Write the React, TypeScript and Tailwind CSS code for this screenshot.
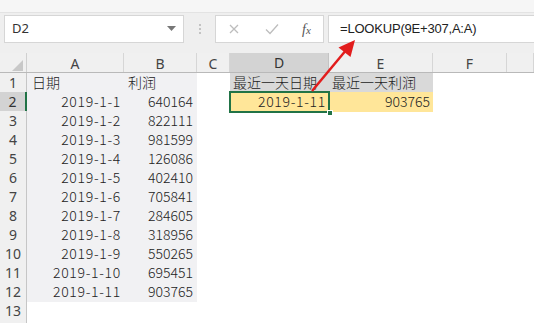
import React from "react";

const cols = ["A", "B", "C", "D", "E", "F", ""];

const data: [string, string][] = [
  ["2019-1-1", "640164"],
  ["2019-1-2", "822111"],
  ["2019-1-3", "981599"],
  ["2019-1-4", "126086"],
  ["2019-1-5", "402410"],
  ["2019-1-6", "705841"],
  ["2019-1-7", "284605"],
  ["2019-1-8", "318956"],
  ["2019-1-9", "550265"],
  ["2019-1-10", "695451"],
  ["2019-1-11", "903765"],
];

const cellFont = { fontFamily: '"Noto Sans CJK SC", "Noto Sans", sans-serif' };

const App = () => {
  const rows = Array.from({ length: 14 }, (_, i) => i + 1);

  return (
    <div
      className="relative w-[534px] h-[323px] overflow-hidden bg-white text-[#222]"
      style={{ fontFamily: '"Noto Sans", "Noto Sans CJK SC", sans-serif' }}
    >
      {/* top strip */}
      <div className="h-[13px] bg-[#f6f6f6] border-b border-[#e3e3e3]" />

      {/* formula bar */}
      <div className="h-[40px] bg-[#efefef] flex items-start pt-[2px] pl-[4px]">
        <div className="w-[180px] h-[28px] bg-white border border-[#d6d6d6] flex items-center justify-between pl-[7px] pr-[7px]">
          <span className="text-[13px] text-[#333]">D2</span>
          <svg width="9" height="6" viewBox="0 0 9 6">
            <path d="M0 0 L9 0 L4.5 5 Z" fill="#777" />
          </svg>
        </div>
        <div className="w-[31px] h-[28px] flex flex-col items-center justify-center gap-[2px]">
          <span className="w-[2px] h-[2px] bg-[#c3c3c3]" />
          <span className="w-[2px] h-[2px] bg-[#c3c3c3]" />
          <span className="w-[2px] h-[2px] bg-[#c3c3c3]" />
        </div>
        <div className="w-[109px] h-[28px] bg-white border border-[#d6d6d6] flex items-center pl-[12px]">
          <svg width="12" height="12" viewBox="0 0 12 12">
            <path d="M2 2 L10 10 M10 2 L2 10" stroke="#bdbdbd" strokeWidth="1.3" />
          </svg>
          <svg className="ml-[25px]" width="14" height="12" viewBox="0 0 14 12">
            <path d="M1 6.5 L5 10.5 L13 1.5" stroke="#bdbdbd" strokeWidth="1.3" fill="none" />
          </svg>
          <span
            className="ml-[23px] text-[14px] italic text-[#555]"
            style={{ fontFamily: '"Liberation Serif", serif' }}
          >
            f<span className="text-[11px]">x</span>
          </span>
        </div>
        <div className="ml-[4px] flex-1 h-[28px] bg-white border border-[#d6d6d6] border-r-0 flex items-center pl-[11px]">
          <span className="text-[13px] text-[#222] tracking-[-0.2px]" style={{ fontFamily: '"Liberation Sans", sans-serif' }}>
            =LOOKUP(9E+307,A:A)
          </span>
        </div>
      </div>

      {/* column headers */}
      <div className="grid grid-cols-[27px_97px_73px_33px_99px_104px_74px_1fr] h-[20px] bg-[#f0f0f0] border-b border-[#b9b9b9] overflow-hidden">
        <div className="relative border-r border-[#d0d0d0]">
          <svg className="absolute right-[3px] bottom-[3px]" width="11" height="11" viewBox="0 0 11 11">
            <path d="M11 0 L11 11 L0 11 Z" fill="#c8c8c8" />
          </svg>
        </div>
        {cols.map((c, i) => (
          <div
            key={i}
            className={
              c === "D"
                ? "flex items-center justify-center text-[14px] leading-[19px] text-[#333] bg-[#d3d3d3] border-r border-[#c4c4c4] border-b-2 border-b-[#217346]"
                : "flex items-center justify-center text-[14px] leading-[19px] text-[#444] border-r border-[#d6d6d6]"
            }
          >
            {c}
          </div>
        ))}
      </div>

      {/* sheet rows */}
      <div className="flex flex-col font-light" style={cellFont}>
        {rows.map((r) => {
          const d = r >= 2 && r <= 12 ? data[r - 2] : null;
          return (
            <div key={r} className="grid grid-cols-[27px_97px_73px_33px_99px_104px_74px_1fr] h-[19px] text-[14px] leading-[19px]">
              <div
                className={
                  r === 2
                    ? "flex items-center justify-center bg-[#d3d3d3] text-[#333] border-r-2 border-r-[#217346] border-b border-b-[#c8c8c8]"
                    : "flex items-center justify-center bg-[#f0f0f0] text-[#444] border-r border-r-[#c6c6c6] border-b border-b-[#dadada]"
                }
                style={{ fontFamily: '"Noto Sans", sans-serif', fontWeight: 400 }}
              >
                {r < 14 ? r : ""}
              </div>
              {r === 1 ? (
                <>
                  <div className="bg-[#f1f1f3] border-b border-[#222] pl-[5px]">日期</div>
                  <div className="bg-[#f1f1f3] border-b border-[#222] pl-[4px]">利润</div>
                  <div />
                  <div className="bg-[#d9d9d9] pl-[3px] whitespace-nowrap">最近一天日期</div>
                  <div className="bg-[#d9d9d9] pl-[3px] whitespace-nowrap">最近一天利润</div>
                  <div />
                  <div />
                </>
              ) : d ? (
                <>
                  <div className="bg-[#f1f1f3] text-right pr-[3px] tracking-[0.7px]">{d[0]}</div>
                  <div className="bg-[#f1f1f3] text-right pr-[4px]">{d[1]}</div>
                  <div />
                  {r === 2 ? (
                    <>
                      <div className="relative bg-[#ffe699] text-right pr-[3px] tracking-[0.7px] outline-2 outline-[#217346] -outline-offset-1">
                        2019-1-11
                        <span className="absolute right-[-4px] bottom-[-4px] w-[6px] h-[6px] bg-[#217346] border border-white" />
                      </div>
                      <div className="bg-[#ffe699] text-right pr-[3px]">903765</div>
                    </>
                  ) : (
                    <>
                      <div />
                      <div />
                    </>
                  )}
                  <div />
                  <div />
                </>
              ) : (
                <>
                  <div />
                  <div />
                  <div />
                  <div />
                  <div />
                  <div />
                  <div />
                </>
              )}
            </div>
          );
        })}
      </div>

      {/* red annotation arrow */}
      <svg className="absolute left-0 top-0 pointer-events-none" width="534" height="323" viewBox="0 0 534 323">
        <line x1="312" y1="91" x2="347" y2="49" stroke="#e21d1d" strokeWidth="2.5" />
        <path d="M355 40 L350.5 57 L338.5 47.5 Z" fill="#e21d1d" />
      </svg>
    </div>
  );
};

export default App;
